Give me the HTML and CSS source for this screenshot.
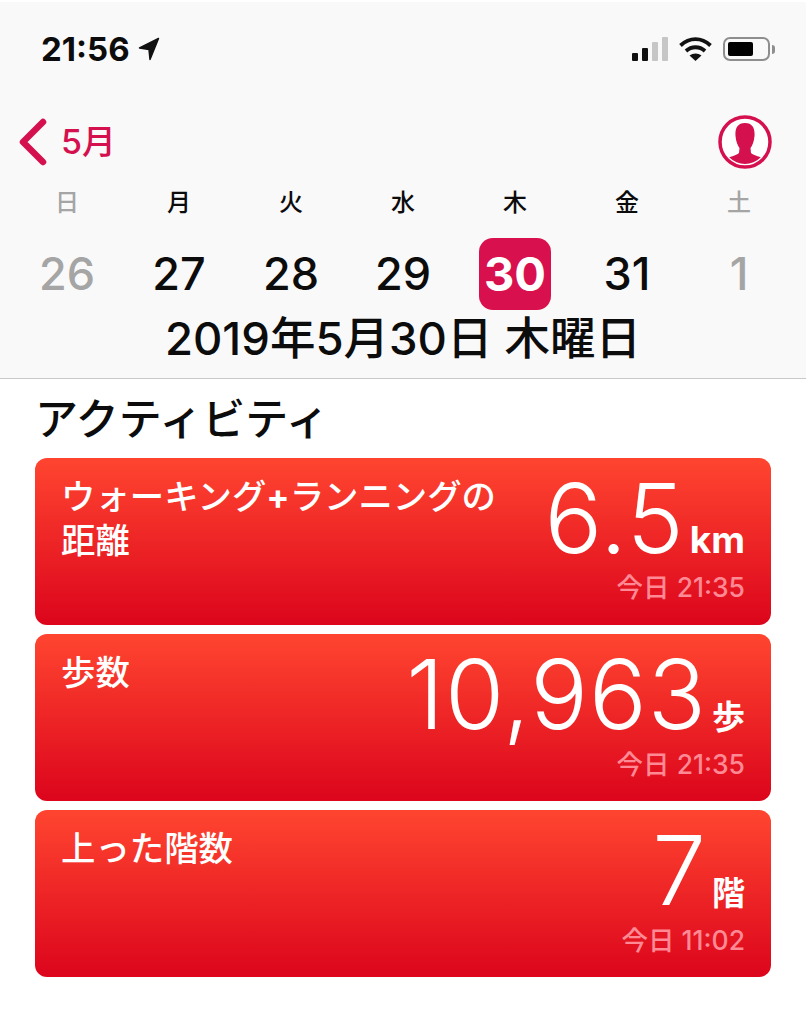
FILE: index.html
```html
<!DOCTYPE html>
<html lang="ja">
<head>
  <title>ヘルスケア</title>
  <link rel="stylesheet" href="styles.css">
</head>
<body>
  <div class="header">
    <div class="status">
      <div class="clock">
        <span>21:56</span>
        <svg class="arrow" width="22" height="24" viewBox="0 0 22 24"><path d="M20.500 1.500 L1.500 11 L11 12.500 L12 22.500 Z" fill="#111" stroke="#111" stroke-width="1.500" stroke-linejoin="round"/></svg>
      </div>
      <div class="status-icons">
        <svg width="36" height="24" viewBox="0 0 36 24">
          <rect x="0" y="16" width="6" height="8" rx="1" fill="#111"/>
          <rect x="10" y="11" width="6" height="13" rx="1" fill="#111"/>
          <rect x="20" y="5" width="6" height="19" rx="1" fill="#c6c6c6"/>
          <rect x="30" y="0" width="6" height="24" rx="1" fill="#c6c6c6"/>
        </svg>
        <svg class="wifi" width="33" height="24" viewBox="0 0 33 24">
          <path d="M1.500 8.500 C10.500 0 22.500 0 31.500 8.500" fill="none" stroke="#111" stroke-width="3.800"/>
          <path d="M7 14 C12.500 9 20.500 9 26 14" fill="none" stroke="#111" stroke-width="3.800"/>
          <path d="M16.500 24 L10.500 18.500 C14 15.800 19 15.800 22.500 18.500 Z" fill="#111"/>
        </svg>
        <div class="battery"><div class="battery-level"></div></div>
        <div class="battery-tip"></div>
      </div>
    </div>

    <div class="nav">
      <div class="back">
        <svg width="30" height="48" viewBox="0 0 30 48"><path d="M26 4 L6 24 L26 44" fill="none" stroke="#d5104f" stroke-width="6.500" stroke-linecap="round" stroke-linejoin="round"/></svg>
        <span class="back-label">5月</span>
      </div>
      <svg class="profile" width="54" height="54" viewBox="0 0 54 54">
        <defs><clipPath id="inner"><circle cx="27" cy="27" r="22"/></clipPath></defs>
        <circle cx="27" cy="27" r="25" fill="#fff" stroke="#d5104f" stroke-width="3.500"/>
        <path clip-path="url(#inner)" d="M27 8 C35 8 37 14 36.500 21 C36 27 34 31 32.500 33 L33 38 C36 41 43 41 46 45 L46 54 L8 54 L8 45 C11 41 18 41 21 38 L21.500 33 C20 31 18 27 17.500 21 C17 14 19 8 27 8 Z" fill="#d5104f"/>
      </svg>
    </div>

    <div class="week">
      <div class="day muted"><span class="dow">日</span><span class="num">26</span></div>
      <div class="day"><span class="dow">月</span><span class="num">27</span></div>
      <div class="day"><span class="dow">火</span><span class="num">28</span></div>
      <div class="day"><span class="dow">水</span><span class="num">29</span></div>
      <div class="day selected"><span class="dow">木</span><span class="num">30</span></div>
      <div class="day"><span class="dow">金</span><span class="num">31</span></div>
      <div class="day muted"><span class="dow">土</span><span class="num">1</span></div>
    </div>

    <div class="date-title">2019年5月30日 木曜日</div>
  </div>

  <div class="content">
    <h2>アクティビティ</h2>

    <div class="card">
      <div class="card-label">ウォーキング<b>+</b>ランニングの<br>距離</div>
      <div class="card-right">
        <div class="value">6.5<span class="unit">km</span></div>
        <div class="stamp">今日 21:35</div>
      </div>
    </div>

    <div class="card">
      <div class="card-label">歩数</div>
      <div class="card-right">
        <div class="value">10,963<span class="unit unit-ja">歩</span></div>
        <div class="stamp">今日 21:35</div>
      </div>
    </div>

    <div class="card">
      <div class="card-label">上った階数</div>
      <div class="card-right">
        <div class="value">7<span class="unit unit-ja">階</span></div>
        <div class="stamp">今日 11:02</div>
      </div>
    </div>
  </div>
</body>
</html>
```

FILE: styles.css
```css
body {
  margin: 0;
  background-color: #fff;
  color: #0c0c0c;
  font-family: "Inter", "Noto Sans CJK JP", sans-serif;
}

.header {
  height: 375px;
  padding-top: 1px;
  background-color: #f9f9f9;
  border-top: 2px solid #fff;
  border-bottom: 1px solid #c9c9c9;
}

.status {
  display: flex;
  justify-content: space-between;
  align-items: center;
  height: 30px;
  margin-top: 31px;
  padding: 0 31px 0 41px;
}

.clock {
  display: flex;
  align-items: center;
  gap: 8px;
  font-size: 33px;
  font-weight: 700;
}

.status-icons {
  display: flex;
  align-items: center;
}

.wifi {
  margin-left: 11px;
}

.battery {
  width: 37px;
  height: 14px;
  margin-left: 11px;
  padding: 3px;
  border: 2px solid #8e8e8e;
  border-radius: 7px;
}

.battery-level {
  width: 25px;
  height: 100%;
  border-radius: 2px;
  background-color: #000;
}

.battery-tip {
  width: 3px;
  height: 9px;
  margin-left: 2px;
  border-radius: 0 3px 3px 0;
  background-color: #8e8e8e;
}

.nav {
  display: flex;
  justify-content: space-between;
  align-items: center;
  height: 58px;
  margin-top: 49px;
  padding: 0 34px 0 17px;
}

.back {
  display: flex;
  align-items: center;
  gap: 14px;
  color: #d5104f;
  font-size: 34px;
  font-weight: 500;
}

.back-label {
  padding-bottom: 5px;
}

.week {
  display: grid;
  grid-template-columns: repeat(7, 1fr);
  margin-top: 16px;
  padding: 0 11px;
}

.day {
  display: flex;
  flex-direction: column;
  align-items: center;
  gap: 19px;
}

.dow {
  font-size: 24px;
  line-height: 32px;
  font-weight: 500;
}

.num {
  width: 72px;
  height: 72px;
  border-radius: 14px;
  font-size: 45px;
  font-weight: 500;
  line-height: 71px;
  text-align: center;
}

.muted {
  color: #a5a5a5;
}

.selected .num {
  background-color: #d8104d;
  color: #fff;
  font-size: 47px;
  font-weight: 700;
}

.date-title {
  margin-top: 1px;
  font-size: 45.500px;
  font-weight: 500;
  line-height: 56px;
  text-align: center;
}

.content {
  padding: 0 35px;
}

h2 {
  margin: 0;
  padding: 11px 0 10px;
  font-size: 43px;
  font-weight: 500;
  line-height: 58px;
}

.card {
  display: flex;
  justify-content: space-between;
  box-sizing: border-box;
  height: 167px;
  margin-bottom: 9px;
  padding: 17px 26px 22px 26px;
  border-radius: 12px;
  background: linear-gradient(#ff4530, #dc051c);
  color: #fff;
}

.card-label {
  font-size: 34.400px;
  font-weight: 500;
  line-height: 44px;
}

.card-right {
  display: flex;
  flex-direction: column;
  align-items: flex-end;
}

.value {
  font-size: 96px;
  font-weight: 350;
  letter-spacing: 1px;
  line-height: 86px;
  white-space: nowrap;
}

.unit {
  margin-left: 5px;
  font-size: 37px;
  font-weight: 700;
  letter-spacing: 0;
}

.unit-ja {
  font-size: 33px;
}

.stamp {
  margin-top: -12px;
  color: #ff8a95;
  font-size: 26.500px;
  font-weight: 500;
  line-height: 32px;
}
```
